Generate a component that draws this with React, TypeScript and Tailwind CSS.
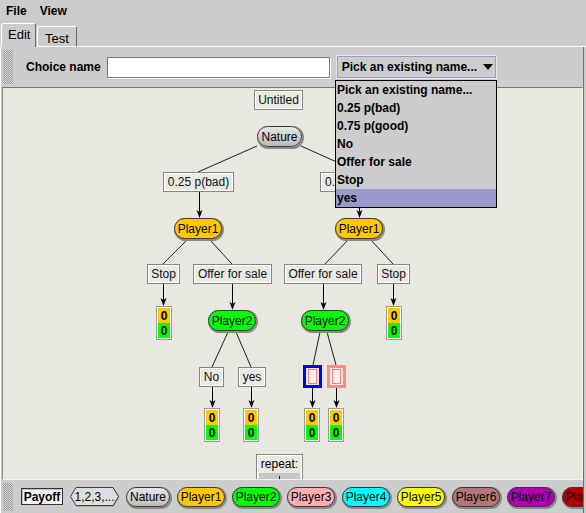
import React from "react";

const CX = 3;
const CY = 88;
const FONT = '"Liberation Sans", Arial, Helvetica, sans-serif';

type Lbl = { x: number; y: number; w: number; t: string };
const labels: Lbl[] = [
  { x: 254, y: 90, w: 49, t: "Untitled" },
  { x: 163, y: 172, w: 71, t: "0.25 p(bad)" },
  { x: 320, y: 172, w: 78, t: "0.75 p(good)" },
  { x: 147, y: 264, w: 33, t: "Stop" },
  { x: 193, y: 264, w: 79, t: "Offer for sale" },
  { x: 284, y: 264, w: 78, t: "Offer for sale" },
  { x: 377, y: 264, w: 33, t: "Stop" },
  { x: 199, y: 367, w: 25, t: "No" },
  { x: 238, y: 367, w: 28, t: "yes" },
];

type P = { x: number; y: number; w: number; t: string; c: string };
const pills: P[] = [
  { x: 257, y: 126, w: 45, t: "Nature", c: "bg-linear-to-b from-[#e6e6e6] to-[#b8b8b8]" },
  { x: 174, y: 218, w: 48, t: "Player1", c: "bg-[#ffc800]" },
  { x: 335, y: 218, w: 48, t: "Player1", c: "bg-[#ffc800]" },
  { x: 208, y: 310, w: 48, t: "Player2", c: "bg-[#00ff00]" },
  { x: 301, y: 310, w: 48, t: "Player2", c: "bg-[#00ff00]" },
];

const payoffs = [
  { x: 156, y: 306 },
  { x: 386, y: 306 },
  { x: 204, y: 408 },
  { x: 243, y: 408 },
  { x: 304, y: 408 },
  { x: 328, y: 408 },
];

const lines: [number, number, number, number][] = [
  [257, 146, 198, 172],
  [301, 146, 359, 172],
  [187, 240, 163, 264],
  [210, 240, 232, 264],
  [348, 240, 325, 264],
  [371, 240, 393, 264],
  [228, 332, 212, 367],
  [236, 332, 251, 367],
  [320, 332, 313, 365],
  [327, 332, 336, 365],
];

const arrows: [number, number, number][] = [
  [199, 192, 218],
  [359, 192, 218],
  [163, 284, 306],
  [232, 284, 310],
  [323, 284, 310],
  [393, 284, 306],
  [212, 387, 408],
  [251, 387, 408],
  [312, 388, 408],
  [336, 388, 408],
];

const menuItems = [
  "Pick an existing name...",
  "0.25 p(bad)",
  "0.75 p(good)",
  "No",
  "Offer for sale",
  "Stop",
  "yes",
];

const palettePlayers = [
  { t: "Nature", w: 44, c: "bg-linear-to-b from-[#e6e6e6] to-[#bcbcbc]" },
  { t: "Player1", w: 48, c: "bg-[#ffc800]" },
  { t: "Player2", w: 48, c: "bg-[#00ff00]" },
  { t: "Player3", w: 48, c: "bg-[#ffafaf]" },
  { t: "Player4", w: 48, c: "bg-[#00ffff]" },
  { t: "Player5", w: 48, c: "bg-[#ffff00]" },
  { t: "Player6", w: 48, c: "bg-[#b07878]" },
  { t: "Player7", w: 48, c: "bg-[#b000b0]" },
  { t: "Player8", w: 48, c: "bg-[#b00000]" },
];

function Grip({ h }: { h: number }) {
  return (
    <svg width={10} height={h} className="shrink-0">
      <defs>
        <pattern id={`g${h}`} width="2" height="2" patternUnits="userSpaceOnUse">
          <rect width="2" height="2" fill="#d8d8d8" />
          <rect x="0" y="0" width="1" height="1" fill="#9a9a9a" />
          <rect x="1" y="1" width="1" height="1" fill="#9a9a9a" />
        </pattern>
      </defs>
      <rect width="10" height={h} fill={`url(#g${h})`} />
    </svg>
  );
}

function Payoff({ x, y }: { x: number; y: number }) {
  return (
    <div
      className="absolute flex h-[34px] w-[16px] flex-col border border-[#9a9a9a] bg-white p-px"
      style={{ left: x - CX, top: y - CY }}
    >
      <div className="flex h-[15px] items-center justify-center bg-[#ffc800] text-[12px] font-bold leading-none text-black">0</div>
      <div className="flex h-[15px] items-center justify-center bg-[#00ff00] text-[12px] font-bold leading-none text-black">0</div>
    </div>
  );
}

export default function App() {
  return (
    <div
      className="relative flex h-[513px] w-[586px] flex-col overflow-hidden bg-[#cccccc] text-black"
      style={{ fontFamily: FONT }}
    >
      {/* Menu bar */}
      <div className="flex h-[22px] items-center text-[12px] font-bold">
        <span className="ml-[6px]">File</span>
        <span className="ml-[13px]">View</span>
      </div>

      {/* Tabs */}
      <div className="flex h-[25px] items-end">
        <div className="ml-px flex h-[24px] w-[35px] shrink-0 items-start rounded-tl-[3px] border-l border-t border-r border-l-white border-t-white border-r-[#6a6a6a] bg-[#cccccc] pl-[6px] pt-[4px] text-[13px] leading-none">
          Edit
        </div>
        <div className="ml-px flex h-[21px] w-[40px] shrink-0 items-start rounded-tl-[3px] border-b border-l border-t border-r border-b-white border-l-white border-t-white border-r-[#6a6a6a] pl-[7px] pt-[5px] text-[13px] leading-none">
          Test
        </div>
        <div className="flex-1 border-b border-white" />
      </div>

      {/* Tab panel */}
      <div className="flex w-[584px] flex-1 flex-col border-l border-r border-l-white border-r-[#707070]">
        {/* toolbar */}
        <div className="flex h-[40px] items-center">
          <div className="ml-[2px] shrink-0">
            <Grip h={34} />
          </div>
          <span className="ml-[13px] shrink-0 whitespace-nowrap text-[12px] font-bold">Choice name</span>
          <div className="ml-[6px] h-[21px] w-[223px] shrink-0 border border-[#7a7a7a] bg-white shadow-[1px_1px_0_#ffffff]" />
          <div className="ml-[6px] flex h-[24px] w-[161px] shrink-0 items-center border border-[#e8e8e8]">
            <div className="flex h-full w-full items-center border border-[#9999cc] pl-[4px] text-[12px] font-bold">
              <span className="shrink-0 whitespace-nowrap">Pick an existing name...</span>
              <svg width="10" height="6" className="ml-[6px] shrink-0">
                <polygon points="0,0 10,0 5,6" fill="#000" />
              </svg>
            </div>
          </div>
        </div>

        {/* canvas */}
        <div className="relative ml-px h-[393px] w-[581px] shrink-0 overflow-hidden border border-b-[#f4f4f4] border-l-[#8a8a8a] border-r-[#f4f4f4] border-t-[#7a7a7a] bg-[#e8e8e0] text-[12px]">
          <svg className="absolute left-0 top-0" width={580} height={392} viewBox={`${CX} ${CY} 580 392`}>
            {lines.map(([x1, y1, x2, y2], i) => (
              <line key={i} x1={x1} y1={y1} x2={x2} y2={y2} stroke="#1e1e1e" strokeWidth={1} />
            ))}
            {arrows.map(([x, y1, y2], i) => (
              <g key={i}>
                <line x1={x + 0.5} y1={y1} x2={x + 0.5} y2={y2 - 4} stroke="#000" strokeWidth={1} />
                <polygon points={`${x - 2.5},${y2 - 8} ${x + 0.5},${y2} ${x + 3.5},${y2 - 8} ${x + 0.5},${y2 - 6}`} fill="#000" />
              </g>
            ))}
          </svg>

          {labels.map((l, i) => (
            <div
              key={i}
              className="absolute flex h-[20px] items-center justify-center whitespace-nowrap border border-[#858585] bg-[#eaeae4] leading-none text-[#111] shadow-[inset_1px_1px_0_#ffffff,inset_-1px_-1px_0_#ffffff]"
              style={{ left: l.x - CX, top: l.y - CY, width: l.w }}
            >
              {l.t}
            </div>
          ))}

          {pills.map((p, i) => (
            <div
              key={i}
              className={`absolute flex h-[21px] items-center justify-center whitespace-nowrap rounded-full border border-[#3a3a3a] leading-none text-black shadow-[1px_1px_0_1px_#8a8a8a] ${p.c}`}
              style={{ left: p.x - CX, top: p.y - CY, width: p.w }}
            >
              {p.t}
            </div>
          ))}

          {payoffs.map((p, i) => (
            <Payoff key={i} x={p.x} y={p.y} />
          ))}

          {/* selected empty payoff holders */}
          <div
            className="absolute flex h-[23px] w-[19px] items-center justify-center border-[3px] border-[#0000ff] bg-[#ecece6]"
            style={{ left: 303 - CX, top: 365 - CY }}
          >
            <div className="h-[15px] w-[9px] border border-[#ff8080] bg-[#f2f2f0]" />
          </div>
          <div
            className="absolute flex h-[23px] w-[19px] items-center justify-center border-[3px] border-[#ff8888] bg-[#ecece6]"
            style={{ left: 327 - CX, top: 365 - CY }}
          >
            <div className="h-[15px] w-[9px] border border-[#ff8080] bg-[#f2f2f0]" />
          </div>

          {/* repeat box */}
          <div
            className="absolute flex h-[32px] w-[47px] flex-col items-center border border-[#858585] bg-[#eaeae4] shadow-[inset_1px_1px_0_#ffffff,inset_-1px_-1px_0_#ffffff]"
            style={{ left: 256 - CX, top: 454 - CY }}
          >
            <span className="mt-[3px] leading-none">repeat:</span>
            <div className="relative mt-[3px] h-[10px] w-[41px] bg-[#c8c8c8]">
              <div className="absolute left-[20px] top-[3px] h-[4px] w-px bg-black" />
            </div>
          </div>
        </div>

        {/* palette */}
        <div className="flex h-[33px] items-center overflow-hidden text-[12px]">
          <div className="ml-[2px] shrink-0">
            <Grip h={28} />
          </div>
          <div className="ml-[8px] flex h-[17px] w-[42px] shrink-0 items-center justify-center border border-[#333] bg-[#f4f4f4] font-bold leading-none shadow-[inset_1px_1px_0_#bdbdbd]">
            Payoff
          </div>
          <div className="relative ml-[7px] flex h-[19px] w-[49px] shrink-0 items-center justify-center leading-none">
            <svg className="absolute left-0 top-0" width="50" height="20">
              <polygon points="6.5,1.5 43.5,1.5 49.5,10 43.5,19.5 6.5,19.5 0.5,10" fill="#8a8a8a" />
              <polygon points="6,0.5 43,0.5 48.5,9.5 43,18.5 6,18.5 0.5,9.5" fill="#dedede" stroke="#404040" />
            </svg>
            <span className="relative">1,2,3,...</span>
          </div>
          {palettePlayers.map((p, i) => (
            <div
              key={i}
              className={`ml-[7px] flex h-[20px] shrink-0 items-center justify-center whitespace-nowrap rounded-full border border-[#3a3a3a] leading-none text-black shadow-[1px_1px_0_1px_#8a8a8a] ${p.c}`}
              style={{ width: p.w }}
            >
              {p.t}
            </div>
          ))}
        </div>
      </div>

      {/* dropdown list overlay */}
      <div className="absolute left-[335px] top-[80px] flex w-[162px] flex-col border border-black bg-[#cccccc] text-[12px] font-bold">
        {menuItems.map((m, i) => (
          <div
            key={i}
            className={`flex h-[18px] items-center whitespace-nowrap pl-px leading-none ${m === "yes" ? "bg-[#9999cc]" : ""}`}
          >
            {m}
          </div>
        ))}
      </div>
    </div>
  );
}
